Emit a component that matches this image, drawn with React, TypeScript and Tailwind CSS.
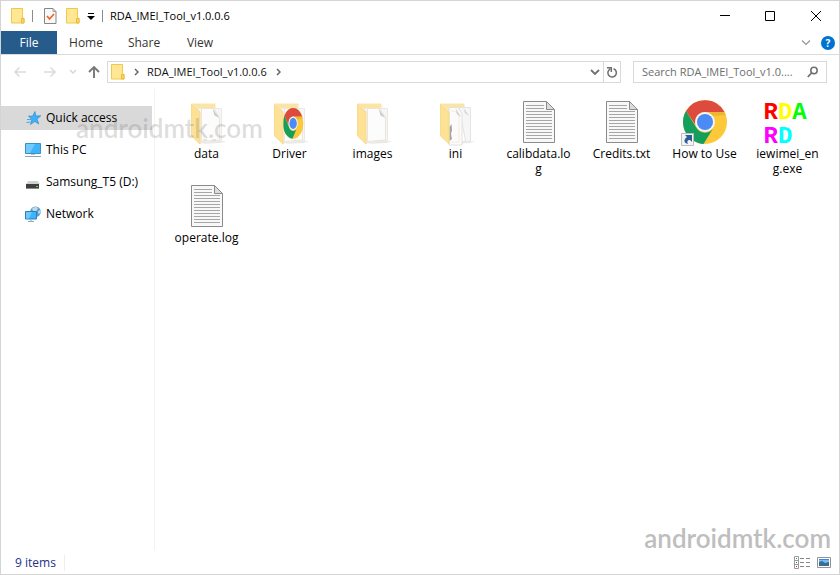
import type { ReactNode } from "react";

function FolderSmall() {
  return (
    <svg width="14" height="16" viewBox="0 0 14 16" aria-hidden="true">
      <path d="M.5.5h11v9l1.500 1v4.500H.5z" fill="#ffe794" stroke="#f0c84e" />
      <path d="M10.500 15V10.500h2.500V15z" fill="#fbd766" stroke="#e9bb3a" />
    </svg>
  );
}

function ChromeDisc() {
  return (
    <>
      <circle cx="22" cy="22" r="22" fill="#fdc93b" />
      <path d="M3 11A22 22 0 0 1 41.500 12H22a10 10 0 0 0-9.500 13z" fill="#dd4b3e" />
      <path d="M3 11A22 22 0 0 0 20.500 44L31 27a10 10 0 0 1-18 0z" fill="#14a05c" />
      <path d="M22 12h19.500l1 3-13 1z" fill="#d9a52a" opacity=".5" />
      <circle cx="22" cy="22" r="10" fill="#f4f4f4" />
      <circle cx="22" cy="22" r="8" fill="#4c8bf5" />
    </>
  );
}

function FolderIcon({ kind }: { kind: "paper" | "plain" | "chrome" | "double" }) {
  return (
    <svg width="48" height="48" viewBox="0 0 48 48" aria-hidden="true">
      <path d="M34 41l9 1.500-6 1.500-18 1z" fill="#e9e9e9" />
      <path d="M8.500 4.500h24V12H17z" fill="#fbe5a6" />
      {kind === "double" ? (
        <>
          <path d="M27 8.500h11.500v33L34 44z" fill="#f6f6f6" stroke="#e4e4e4" />
          <path d="M17 8.500h9l4 6V46H17z" fill="#fbfbfb" stroke="#e0e0e0" />
          <path d="M19 12h4l4 5v26h-8" fill="none" stroke="#f6ead6" />
          <path d="M23.500 9l1.500 6 4 3zM31.500 9l1.500 5 4 3z" fill="#cfcfcf" />
          <path d="M17.500 28l2-3 .5 6-1 4 1 5-2.500 2z" fill="#a5a5a5" />
        </>
      ) : (
        <>
          <path d="M15 9.500h23.500v32L17 44z" fill="#f6f6f6" stroke="#e9e9e9" />
          <path d="M18.500 9.500h12l6 9v22.500l-18 1.500z" fill="#fcfcfc" stroke="#eee5d8" />
          <path d="M29.500 9.500l2 7 5 2.500z" fill="#cdcdcd" />
          {kind === "paper" && <path d="M20 41h4M29 41h4" stroke="#d8d0c6" />}
        </>
      )}
      {kind === "chrome" && (
        <g transform="translate(17 9) scale(.46 .7)">
          <ChromeDisc />
        </g>
      )}
      <path d="M8.500 5l8.500 8v32l-8.500-8z" fill="#fde195" stroke="#f8d67e" strokeWidth=".8" />
    </svg>
  );
}

function DocIcon() {
  return (
    <svg width="48" height="48" viewBox="0 0 48 48" aria-hidden="true">
      <path d="M8.500 2.500h23l8 8v33h-31z" fill="#f8f8f8" stroke="#8b8b8b" />
      <path d="M31.500 2.500v8h8z" fill="#dcdcdc" stroke="#8b8b8b" />
      <path
        d="M11 6.500h18M11 9.500h18M11 12.500h26M11 15.500h26M11 18.500h26M11 21.500h26M11 24.500h26M11 27.500h26M11 30.500h26M11 33.500h26M11 36.500h26M11 39.500h26"
        stroke="#a6a6a6"
      />
    </svg>
  );
}

function ShortcutIcon() {
  return (
    <svg width="48" height="48" viewBox="0 0 48 48" aria-hidden="true">
      <g transform="translate(2 1)">
        <ChromeDisc />
      </g>
      <path d="M.5 34.500h12v12H.5z" fill="#f4f4f4" stroke="#bdbdbd" />
      <path d="M4 36h7v7l-2-2c-3 0-3 2-2 4-4-1-5-4-1-7z" fill="#2d5d97" />
    </svg>
  );
}

function RdaIcon() {
  return (
    <span className="block h-12 w-12 pt-0.5 text-left font-['Liberation_Mono',monospace] text-2xl leading-6 font-bold">
      <span className="block">
        <span className="text-[#ff0000]">R</span>
        <span className="text-[#ffff00]">D</span>
        <span className="text-[#00ff00]">A</span>
      </span>
      <span className="block">
        <span className="text-[#ff00ff]">R</span>
        <span className="text-[#00ffff]">D</span>
      </span>
    </span>
  );
}

const files: { name: string; icon: ReactNode }[] = [
  { name: "data", icon: <FolderIcon kind="paper" /> },
  { name: "Driver", icon: <FolderIcon kind="chrome" /> },
  { name: "images", icon: <FolderIcon kind="plain" /> },
  { name: "ini", icon: <FolderIcon kind="double" /> },
  { name: "calibdata.log", icon: <DocIcon /> },
  { name: "Credits.txt", icon: <DocIcon /> },
  { name: "How to Use", icon: <ShortcutIcon /> },
  { name: "iewimei_eng.exe", icon: <RdaIcon /> },
  { name: "operate.log", icon: <DocIcon /> },
];

const places: { name: string; icon: ReactNode }[] = [
  {
    name: "Quick access",
    icon: (
      <svg width="16" height="16" viewBox="0 0 16 16" aria-hidden="true">
        <path d="M10 1.500l.8 4.500 5-.3-3.800 3.500 1.800 4.800-4-2.500-4.300 3 1.300-4.800L3.500 6l4 .2z" fill="#3fb0f5" stroke="#1d86d0" strokeWidth=".6" />
        <path d="M2 9.500h4M1.500 12.500l4-.5" stroke="#4aa6e0" />
      </svg>
    ),
  },
  {
    name: "This PC",
    icon: (
      <svg width="16" height="16" viewBox="0 0 16 16" aria-hidden="true">
        <path d="M.5 1.500h15v10H.5z" fill="#3db4fb" stroke="#3f8fc0" />
        <path d="M1 2h9l-5 9H1z" fill="#72cbff" />
        <path d="M6 12.500h4" stroke="#b7c7d0" />
        <path d="M0 14.500h16" stroke="#86a8bd" />
      </svg>
    ),
  },
  {
    name: "Samsung_T5 (D:)",
    icon: (
      <svg width="16" height="16" viewBox="0 0 16 16" aria-hidden="true">
        <path d="M3.500 7h9l2.500 3H1z" fill="#d2d2d2" />
        <path d="M1 10h13v5H1z" fill="#3f3f3f" />
        <path d="M1 14.500h13" stroke="#8c8c8c" />
        <path d="M11 12h2v1h-2z" fill="#4ee04e" />
      </svg>
    ),
  },
  {
    name: "Network",
    icon: (
      <svg width="16" height="16" viewBox="0 0 16 16" aria-hidden="true">
        <circle cx="10.500" cy="5.700" r="5.300" fill="#5d9cc8" />
        <path d="M7 2.500l4-2 2 2-2 3-3-.5zM13 5l2.500-1v3l-2 1z" fill="#b9dcee" />
        <path d="M.5 5.500h11v7.500H.5z" fill="#3db4fb" stroke="#2b7fb5" />
        <path d="M1 6h6l-3 6.500H1z" fill="#6fc9ff" />
        <path d="M6 13.500v1.500M3 15.500h6" stroke="#8ba9ba" />
      </svg>
    ),
  },
];

const iconButton = "flex shrink-0 items-center justify-center";

export default function App() {
  return (
    <div className="relative flex h-screen flex-col border border-[#d4d4d4] bg-white font-['Open_Sans','Noto_Sans',sans-serif] text-xs text-black">
      <header className="flex h-[30px] shrink-0 items-center">
        <div className="flex items-center pl-[10px]">
          <FolderSmall />
          <span className="ml-[7px] h-3 w-px bg-[#8c8c8c]" />
          <button className={`${iconButton} ml-[11px]`} aria-label="Properties">
            <svg width="13" height="16" viewBox="0 0 13 16" aria-hidden="true">
              <path d="M.5.500h8.500l3 3v12H.5z" fill="#f8f8f8" stroke="#858585" />
              <path d="M9 .5v3h3" fill="none" stroke="#a0a0a0" />
              <path d="M3 8l2.500 3L10 6" fill="none" stroke="#f06428" strokeWidth="1.700" />
            </svg>
          </button>
          <button className={`${iconButton} ml-[9px]`} aria-label="New folder">
            <FolderSmall />
          </button>
          <button className={`${iconButton} ml-[7px]`} aria-label="Customize Quick Access Toolbar">
            <svg width="8" height="8" viewBox="0 0 8 8" aria-hidden="true">
              <path d="M1 1.500h6" stroke="#000" />
              <path d="M0 4h8L4 8z" />
            </svg>
          </button>
          <span className="ml-[7px] h-3 w-px bg-[#8c8c8c]" />
        </div>
        <h1 className="ml-[7px] text-[11px]">RDA_IMEI_Tool_v1.0.0.6</h1>
        <div className="ml-auto flex">
          <button className={`${iconButton} h-7 w-[45px]`} aria-label="Minimize">
            <svg width="10" height="10" viewBox="0 0 10 10" aria-hidden="true">
              <path d="M0 4.500h10" stroke="#000" />
            </svg>
          </button>
          <button className={`${iconButton} h-7 w-[45px]`} aria-label="Maximize">
            <svg width="10" height="10" viewBox="0 0 10 10" aria-hidden="true">
              <path d="M.5.500h9v9h-9z" fill="none" stroke="#000" />
            </svg>
          </button>
          <button className={`${iconButton} h-7 w-[47px]`} aria-label="Close">
            <svg width="10" height="10" viewBox="0 0 10 10" aria-hidden="true">
              <path d="M0 0l10 10M10 0L0 10" stroke="#000" />
            </svg>
          </button>
        </div>
      </header>

      <nav className="flex h-6 shrink-0 items-stretch border-b border-[#dadbdc]">
        <button className="w-14 bg-[#265c8b] text-white">File</button>
        <button className="w-[58px] text-[#333]">Home</button>
        <button className="w-[58px] text-[#333]">Share</button>
        <button className="w-[54px] text-[#333]">View</button>
        <button className={`${iconButton} ml-auto`} aria-label="Expand the ribbon">
          <svg width="10" height="10" viewBox="0 0 10 10" aria-hidden="true">
            <path d="M1 2.500l4 4 4-4" fill="none" stroke="#969696" strokeWidth="1.200" />
          </svg>
        </button>
        <button className={`${iconButton} mr-1 ml-2.5`} aria-label="Help">
          <span className="flex h-3.5 w-3.5 items-center justify-center rounded-full bg-[#0072d0] text-[10px] leading-none font-bold text-white">
            ?
          </span>
        </button>
      </nav>

      <div className="flex h-[34px] shrink-0 items-center">
        <button className={`${iconButton} ml-3`} aria-label="Back">
          <svg width="14" height="12" viewBox="0 0 14 12" aria-hidden="true">
            <path d="M13 6H2M6.500 1.500L2 6l4.500 4.500" fill="none" stroke="#dcdcdc" strokeWidth="1.600" />
          </svg>
        </button>
        <button className={`${iconButton} ml-4`} aria-label="Forward">
          <svg width="14" height="12" viewBox="0 0 14 12" aria-hidden="true">
            <path d="M1 6h11M7.500 1.500L12 6l-4.500 4.500" fill="none" stroke="#dcdcdc" strokeWidth="1.600" />
          </svg>
        </button>
        <button className={`${iconButton} ml-3`} aria-label="Recent locations">
          <svg width="8" height="8" viewBox="0 0 8 8" aria-hidden="true">
            <path d="M1 2l3 3 3-3" fill="none" stroke="#d5d5d5" strokeWidth="1.400" />
          </svg>
        </button>
        <button className={`${iconButton} ml-[10px]`} aria-label="Up">
          <svg width="14" height="14" viewBox="0 0 14 14" aria-hidden="true">
            <path d="M7 13V2M2 7l5-5 5 5" fill="none" stroke="#777" strokeWidth="1.900" />
          </svg>
        </button>
        <div className="ml-[6px] flex h-[22px] min-w-0 flex-1 items-center border border-[#d9d9d9]">
          <span className="ml-[3px]">
            <FolderSmall />
          </span>
          <Chevron />
          <button className="ml-2 text-[11px] text-[#111]">RDA_IMEI_Tool_v1.0.0.6</button>
          <Chevron />
          <button className={`${iconButton} ml-auto h-full w-4`} aria-label="Previous locations">
            <svg width="10" height="8" viewBox="0 0 10 8" aria-hidden="true">
              <path d="M1 2l4 4 4-4" fill="none" stroke="#707070" strokeWidth="1.800" />
            </svg>
          </button>
          <button className={`${iconButton} h-full w-[17px] border-l border-[#d9d9d9]`} aria-label="Refresh">
            <svg width="12" height="12" viewBox="0 0 12 12" aria-hidden="true">
              <path d="M7.500 2.800A4.200 4.200 0 1 1 2.800 4.200L4.500 2.500" fill="none" stroke="#707070" strokeWidth="1.500" />
              <path d="M1 1.700h4.300v4.300" fill="none" stroke="#707070" strokeWidth="1.500" />
            </svg>
          </button>
        </div>
        <label className="mr-3 ml-3 flex h-[22px] w-[194px] items-center border border-[#d9d9d9] pr-2 pl-2">
          <input
            type="text"
            aria-label="Search RDA_IMEI_Tool_v1.0.0.6"
            placeholder="Search RDA_IMEI_Tool_v1.0...."
            className="min-w-0 flex-1 text-[11px] outline-none placeholder:text-[#6d6d6d]"
          />
          <svg width="11" height="12" viewBox="0 0 11 12" aria-hidden="true">
            <circle cx="7" cy="4.500" r="3.200" fill="none" stroke="#6f6f6f" strokeWidth="1.500" />
            <path d="M4.500 7L.8 11" stroke="#6f6f6f" strokeWidth="1.800" />
          </svg>
        </label>
      </div>

      <div className="flex min-h-0 flex-1">
        <aside className="w-[154px] shrink-0 border-r border-[#f3f3f3] pt-[17px]">
          <ul className="flex flex-col gap-2 pr-0.5">
            {places.map((place, index) => (
              <li key={place.name}>
                <button
                  className={`flex h-6 w-full items-center gap-[5px] pl-6 whitespace-nowrap ${index === 0 ? "bg-[#d9d9d9]" : ""}`}
                >
                  {place.icon}
                  {place.name}
                </button>
              </li>
            ))}
          </ul>
        </aside>
        <main className="flex-1 pt-[10px] pl-[10px]">
          <ul className="grid grid-cols-[repeat(auto-fill,83px)] gap-y-1">
            {files.map((file) => (
              <li key={file.name}>
                <button className="flex h-20 w-full flex-col items-center px-2 leading-[15px]">
                  <span className="h-[47px]">{file.icon}</span>
                  <span className="w-full text-center break-all">{file.name}</span>
                </button>
              </li>
            ))}
          </ul>
        </main>
      </div>

      <footer className="flex h-6 shrink-0 items-center pt-px pr-2 pl-[14px]">
        <span className="border-r border-[#eee] pr-2 text-[#1e3287]">9 items</span>
        <button className={`${iconButton} ml-auto`} aria-label="Details view">
          <svg width="16" height="13" viewBox="0 0 16 13" aria-hidden="true">
            <path d="M.5.500h4v12h-4zM.5 4.500h4M.5 8.500h4" fill="#fff" stroke="#999" />
            <path d="M6 2.500h4m2 0h4M6 6.500h4m2 0h4M6 10.500h4m2 0h4" stroke="#858585" />
            <path d="M2 2h1v1H2z" fill="#269c3b" />
            <path d="M2 6h1v1H2z" fill="#36f" />
            <path d="M2 10h1v1H2z" fill="#d22" />
          </svg>
        </button>
        <button className={`${iconButton} ml-[7px]`} aria-label="Large icons view">
          <svg width="14" height="11" viewBox="0 0 14 11" aria-hidden="true">
            <path d="M.5.500h13v10H.5z" fill="#fff" stroke="#929292" />
            <path d="M2 2h10v7H2z" fill="#7cb9f5" />
            <path d="M2 5l3-1 3 2 4-1v4H2z" fill="#356f91" />
            <path d="M2 2h10v1H2z" fill="#3e84e8" />
          </svg>
        </button>
      </footer>

      <span className="pointer-events-none absolute top-[113px] left-[75px] font-[Lato,sans-serif] text-[26px] leading-7 font-semibold text-[#777]/25">
        androidmtk.com
      </span>
      <span className="pointer-events-none absolute right-2 bottom-[22px] font-[Lato,sans-serif] text-[26px] leading-7 font-semibold text-[#bebebe]">
        androidmtk.com
      </span>
    </div>
  );
}

function Chevron() {
  return (
    <svg className="ml-[9px] shrink-0" width="5" height="8" viewBox="0 0 5 8" aria-hidden="true">
      <path d="M1 1l3 3-3 3" fill="none" stroke="#666" strokeWidth="1.500" />
    </svg>
  );
}
